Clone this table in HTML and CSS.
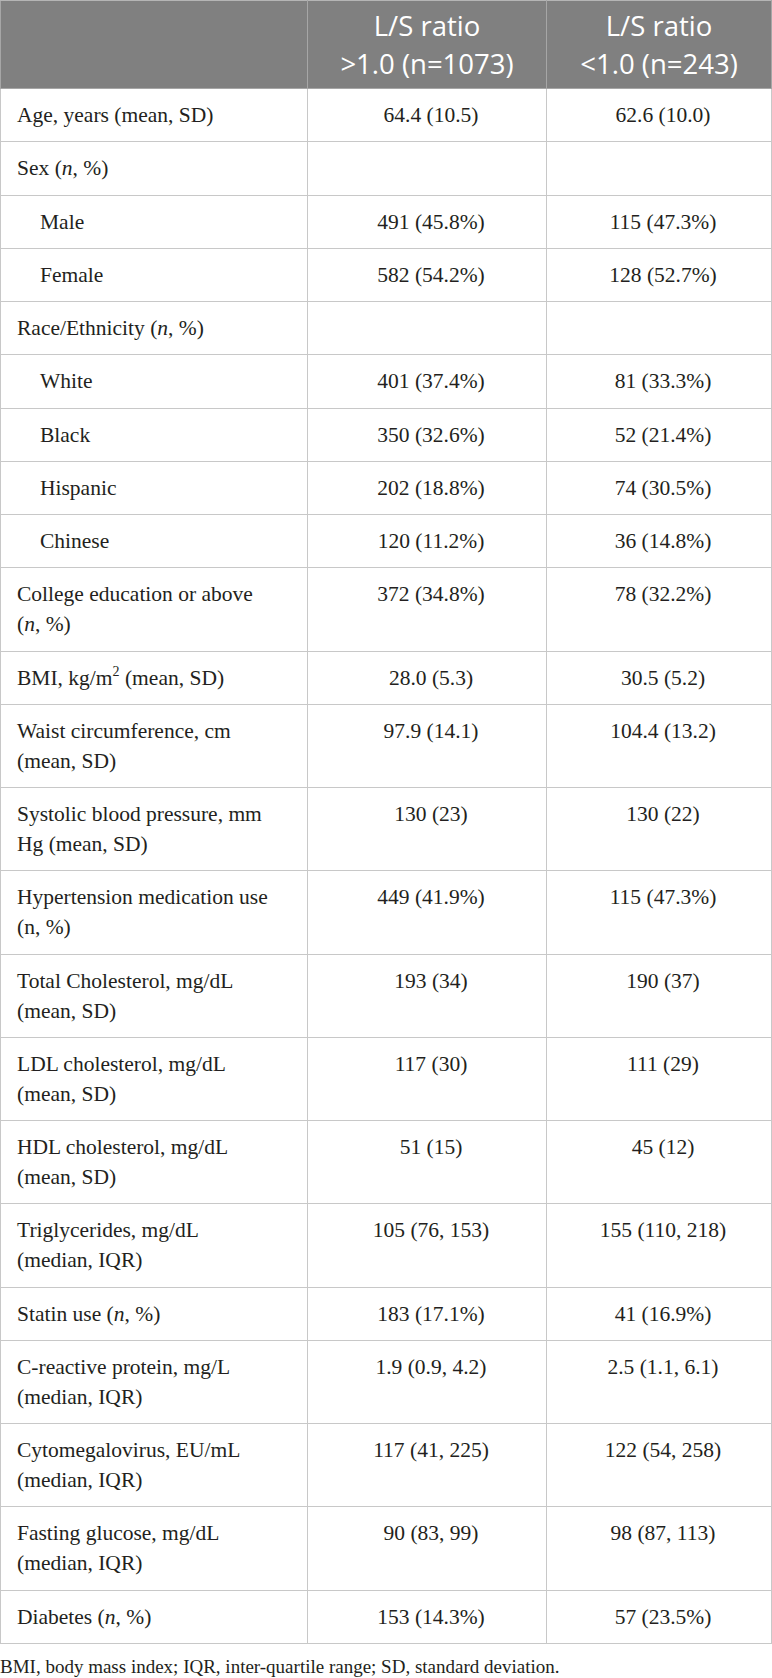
FILE: index.html
```html
<!DOCTYPE html>
<html lang="en">
<head>
<meta charset="utf-8">
<title>Table</title>
<link rel="stylesheet" href="styles.css">
</head>
<body>
<table class="data">
  <colgroup>
    <col class="c1">
    <col class="c2">
    <col class="c3">
  </colgroup>
  <thead>
    <tr>
      <th></th>
      <th>L/S ratio<br>&gt;1.0 (n=1073)</th>
      <th>L/S ratio<br>&lt;1.0 (n=243)</th>
    </tr>
  </thead>
  <tbody>
    <tr><td>Age, years (mean, SD)</td><td>64.4 (10.5)</td><td>62.6 (10.0)</td></tr>
    <tr><td>Sex (<i>n</i>, %)</td><td></td><td></td></tr>
    <tr><td class="ind">Male</td><td>491 (45.8%)</td><td>115 (47.3%)</td></tr>
    <tr><td class="ind">Female</td><td>582 (54.2%)</td><td>128 (52.7%)</td></tr>
    <tr><td>Race/Ethnicity (<i>n</i>, %)</td><td></td><td></td></tr>
    <tr><td class="ind">White</td><td>401 (37.4%)</td><td>81 (33.3%)</td></tr>
    <tr><td class="ind">Black</td><td>350 (32.6%)</td><td>52 (21.4%)</td></tr>
    <tr><td class="ind">Hispanic</td><td>202 (18.8%)</td><td>74 (30.5%)</td></tr>
    <tr><td class="ind">Chinese</td><td>120 (11.2%)</td><td>36 (14.8%)</td></tr>
    <tr><td>College education or above<br>(<i>n</i>, %)</td><td>372 (34.8%)</td><td>78 (32.2%)</td></tr>
    <tr><td>BMI, kg/m<sup>2</sup> (mean, SD)</td><td>28.0 (5.3)</td><td>30.5 (5.2)</td></tr>
    <tr><td>Waist circumference, cm<br>(mean, SD)</td><td>97.9 (14.1)</td><td>104.4 (13.2)</td></tr>
    <tr><td>Systolic blood pressure, mm<br>Hg (mean, SD)</td><td>130 (23)</td><td>130 (22)</td></tr>
    <tr><td>Hypertension medication use<br>(n, %)</td><td>449 (41.9%)</td><td>115 (47.3%)</td></tr>
    <tr><td>Total Cholesterol, mg/dL<br>(mean, SD)</td><td>193 (34)</td><td>190 (37)</td></tr>
    <tr><td>LDL cholesterol, mg/dL<br>(mean, SD)</td><td>117 (30)</td><td>111 (29)</td></tr>
    <tr><td>HDL cholesterol, mg/dL<br>(mean, SD)</td><td>51 (15)</td><td>45 (12)</td></tr>
    <tr><td>Triglycerides, mg/dL<br>(median, IQR)</td><td>105 (76, 153)</td><td>155 (110, 218)</td></tr>
    <tr><td>Statin use (<i>n</i>, %)</td><td>183 (17.1%)</td><td>41 (16.9%)</td></tr>
    <tr><td>C-reactive protein, mg/L<br>(median, IQR)</td><td>1.9 (0.9, 4.2)</td><td>2.5 (1.1, 6.1)</td></tr>
    <tr><td>Cytomegalovirus, EU/mL<br>(median, IQR)</td><td>117 (41, 225)</td><td>122 (54, 258)</td></tr>
    <tr><td>Fasting glucose, mg/dL<br>(median, IQR)</td><td>90 (83, 99)</td><td>98 (87, 113)</td></tr>
    <tr><td>Diabetes (<i>n</i>, %)</td><td>153 (14.3%)</td><td>57 (23.5%)</td></tr>
  </tbody>
</table>
<p class="note">BMI, body mass index; IQR, inter-quartile range; SD, standard deviation.</p>
</body>
</html>
```

FILE: styles.css
```css
html, body {
  margin: 0;
  padding: 0;
  background: #ffffff;
}

body {
  width: 772px;
  font-family: "Liberation Serif", "Times New Roman", serif;
  color: #231f20;
}

.data {
  width: 771px;
  border-collapse: collapse;
  table-layout: fixed;
}

.c1 { width: 307px; }
.c2 { width: 239px; }
.c3 { width: 225px; }

.data th {
  background: #808080;
  color: #ffffff;
  font-family: "Open Sans", "Noto Sans", sans-serif;
  font-weight: 400;
  font-size: 27.5px;
  line-height: 37.5px;
  height: 75px;
  padding: 6px 4px 6px;
  text-align: center;
  vertical-align: middle;
  border: 1px solid #a6a6a6;
  border-top-color: #b5b5b5;
}

.data td {
  font-size: 21.5px;
  line-height: 30px;
  padding: 11px 8px 11.25px 16px;
  border: 1px solid #c8c8c8;
  vertical-align: top;
  text-align: center;
}

.data td:first-child {
  text-align: left;
}

.data td.ind {
  padding-left: 39px;
}

.data i {
  font-style: italic;
}

.data sup {
  font-size: 14px;
  line-height: 0;
  vertical-align: 9px;
}

.note {
  margin: 10px 0 0 0;
  font-size: 19px;
  line-height: 26px;
  color: #231f20;
}
```
